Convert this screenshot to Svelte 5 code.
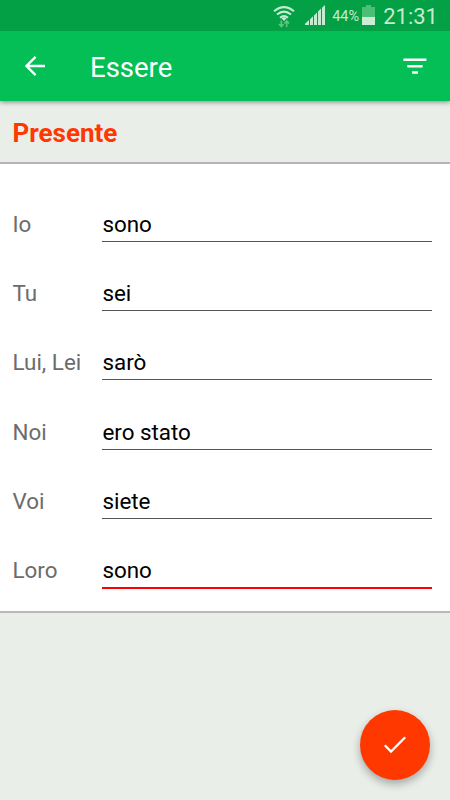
<script lang="ts">
    type Field = { pronoun: string; answer: string };

    let tense = 'Presente';
    let active = 5;

    let fields: Field[] = [
        { pronoun: 'Io', answer: 'sono' },
        { pronoun: 'Tu', answer: 'sei' },
        { pronoun: 'Lui, Lei', answer: 'sarò' },
        { pronoun: 'Noi', answer: 'ero stato' },
        { pronoun: 'Voi', answer: 'siete' },
        { pronoun: 'Loro', answer: 'sono' }
    ];
</script>

<div class="screen">
    <div class="status-bar">
        <svg class="wifi" width="22" height="24" viewBox="0 0 22 24" fill="none">
            <g stroke="#c3ecd0" stroke-width="2">
                <path d="M1 6.2Q11 -2 21 6.2" />
                <path d="M4 9.6Q11 3.6 18 9.6" />
                <path d="M7 12.8Q11 9.4 15 12.8" />
            </g>
            <path d="M11 16l-2.6-2.7q2.6-2 5.2 0z" fill="#c3ecd0" />
            <path d="M8.3 15.5v6M6 19l2.3 2.6 2.3-2.6M13.7 22v-6M11.4 18.5l2.3-2.6 2.3 2.6" stroke="#63c584" stroke-width="1.5" />
        </svg>
        <svg class="signal" width="20" height="20" viewBox="0 0 20 20" fill="#c3ecd0">
            <path d="M0 20v-1.2l4-3.7V20zM5 20v-5.8l3-2.9V20zM9 20v-9.6l3-3V20zM13 20V6.5l3-3V20zM17 20V2.7L20 0V20z" />
        </svg>
        <span class="percent">44%</span>
        <svg class="battery" width="13" height="20" viewBox="0 0 13 20">
            <path d="M0 2h4V0h5v2h4v18H0z" fill="#4dbe75" />
            <path d="M0 12h13v8H0z" fill="#c9eed5" />
        </svg>
        <span class="clock">21:31</span>
    </div>

    <header>
        <button class="icon back" aria-label="Back">
            <svg width="20" height="20" viewBox="0 0 20 20" fill="none" stroke="#fff" stroke-width="2.3">
                <path d="M20 10H1.7M10.6 .9L1.5 10l9.1 9.1" />
            </svg>
        </button>
        <h1>Essere</h1>
        <button class="icon filter" aria-label="Filter">
            <svg width="24" height="16" viewBox="0 0 24 16" fill="#fff">
                <path d="M.4 .6h23v2.5H.4zM4.3 6.9h15.3v2.5H4.3zM9.1 13.2h5.8v2.5H9.1z" />
            </svg>
        </button>
    </header>

    <h2>{tense}</h2>

    <form>
        {#each fields as field, i}
            <label class:active={i === active}>
                <span>{field.pronoun}</span>
                <input type="text" spellcheck="false" bind:value={field.answer} on:focus={() => (active = i)} />
            </label>
        {/each}
    </form>

    <footer>
        <button class="fab" aria-label="Check">
            <svg width="24" height="18" viewBox="0 0 24 18" fill="none" stroke="#fff" stroke-width="2.3">
                <path d="M1.8 9.2l6.2 6.3L22.2 1.3" />
            </svg>
        </button>
    </footer>
</div>

<style>
    :global(body) {
        margin: 0;
    }

    .screen {
        width: 450px;
        height: 800px;
        display: flex;
        flex-direction: column;
        overflow: hidden;
        background: #e9eee9;
        font-family: Roboto, sans-serif;
    }

    button {
        border: 0;
        padding: 0;
        cursor: pointer;
    }

    svg {
        display: block;
        flex-shrink: 0;
    }

    .status-bar {
        position: relative;
        z-index: 1;
        height: 31px;
        flex-shrink: 0;
        box-sizing: border-box;
        padding-right: 12px;
        display: flex;
        align-items: center;
        justify-content: flex-end;
        background: #03a045;
        color: #c3ecd0;
    }

    .wifi {
        margin: 3px 10px 0 0;
    }

    .signal {
        margin: 0 7px 1px 0;
    }

    .percent {
        width: 28px;
        margin: 2px 2px 0 0;
        font-size: 14.5px;
        white-space: nowrap;
    }

    .battery {
        margin: 0 8px 1px 0;
    }

    .clock {
        font-size: 22px;
        line-height: 31px;
        margin-top: 2px;
    }

    header {
        position: relative;
        height: 70px;
        flex-shrink: 0;
        box-sizing: border-box;
        padding: 0 23px 0 25px;
        display: flex;
        align-items: center;
        background: #04bf55;
        box-shadow: 0 1px 5px rgba(0, 0, 0, 0.45);
    }

    .icon {
        background: none;
    }

    h1 {
        flex: 1;
        margin: 3px 0 0 45px;
        color: #fff;
        font-size: 27.5px;
        font-weight: 400;
    }

    h2 {
        height: 63px;
        flex-shrink: 0;
        box-sizing: border-box;
        margin: 0;
        padding: 2px 12.5px 0;
        border-bottom: 2px solid #b3b4b3;
        color: #ff3700;
        font-size: 26px;
        font-weight: 700;
        line-height: 60px;
    }

    form {
        height: 449px;
        flex-shrink: 0;
        box-sizing: border-box;
        padding: 8.9px 18px 0 12.5px;
        border-bottom: 2px solid #b8b8b7;
        background: #fff;
    }

    label {
        height: 69.2px;
        display: flex;
        align-items: flex-end;
        font-size: 22.4px;
    }

    label span {
        width: 89.9px;
        height: 33px;
        color: #6c6c6c;
        line-height: 30px;
    }

    input {
        flex: 1;
        min-width: 0;
        height: 33px;
        box-sizing: border-box;
        padding: 0 0 2px;
        border: 0;
        border-bottom: 1px solid #555;
        border-radius: 0;
        outline: 0;
        background: none;
        color: #000;
        font: inherit;
    }

    .active input {
        height: 34px;
        margin-bottom: -1px;
        border-bottom: 2px solid #f00;
    }

    footer {
        flex: 1;
        display: flex;
        align-items: flex-end;
        justify-content: flex-end;
        padding: 0 20px 20px;
    }

    .fab {
        width: 70px;
        height: 70px;
        display: flex;
        align-items: center;
        justify-content: center;
        border-radius: 50%;
        background: #ff3800;
        box-shadow: 0 4px 9px rgba(0, 0, 0, 0.3);
    }
</style>
